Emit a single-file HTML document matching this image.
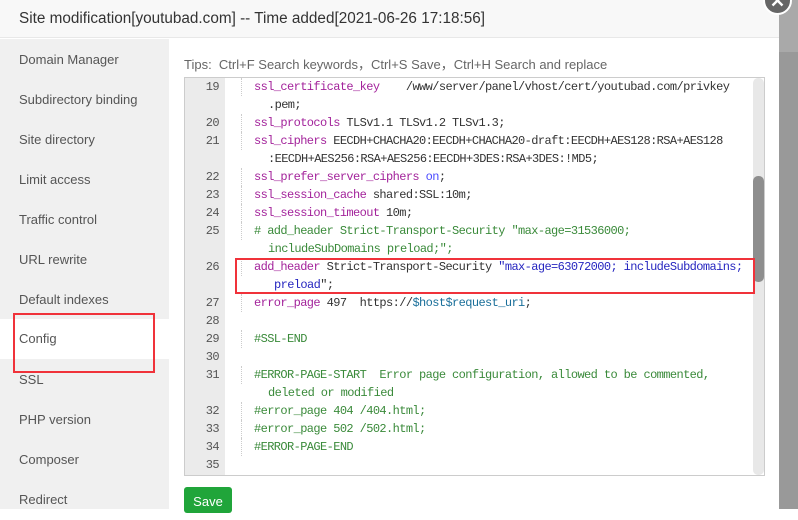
<!DOCTYPE html>
<html><head><meta charset="utf-8"><style>
*{margin:0;padding:0;box-sizing:border-box}
body{width:798px;height:509px;overflow:hidden;background:#fff;font-family:"Liberation Sans",sans-serif;position:relative}
.title{position:absolute;left:0;top:0;width:779px;height:38px;background:#f8f8f8;border-bottom:1px solid #e8e8e8;font-size:15.3px;color:#333;padding-left:19px;line-height:37px}
.side{position:absolute;left:0;top:39px;width:169px;height:470px;background:#f0f0f0}
.side div{position:absolute;left:0;width:169px;height:40px;line-height:40px;padding-left:19px;font-size:13px;color:#555}
.side .sel{background:#fff}
.strip{position:absolute;left:779px;top:0;width:19px;height:509px;background:#999}
.close{position:absolute;left:763px;top:-14px;width:29px;height:29px;border-radius:50%;background:#666;border:2px solid #fff}
.tips{position:absolute;left:184px;top:54px;font-size:13px;color:#666}
.ed{position:absolute;left:184px;top:77px;width:581px;height:399px;border:1px solid #ccc;background:#fff;overflow:hidden}
.gut{position:absolute;left:0;top:0;width:40px;height:399px;background:#ebebeb}
.ln{position:absolute;font-family:"Liberation Mono",monospace;font-size:12px;letter-spacing:-0.6px;height:18px;line-height:18px;white-space:pre;color:#333}
.n{left:0;width:34px;text-align:right;color:#555}
.g{position:absolute;left:56px;width:0;border-left:1px dotted #ccc;height:18px}
.t{left:69px}
.w{left:83px}
.k{color:#a3239b}.c{color:#3a8a3a}.s{color:#2626c0}.v{color:#1a6f9a}.o{color:#4a4aff}
.sb{position:absolute;left:568px;top:0;width:11px;height:397px;background:#e8e8e8;border-radius:5px}
.th{position:absolute;left:568px;top:98px;width:11px;height:106px;background:#8e8e8e;border-radius:5px}
.save{position:absolute;left:184px;top:487px;width:48px;height:26px;background:#20a53a;border-radius:3px;color:#fff;font-size:13px;text-align:center;line-height:30px}
.rb{position:absolute;border:2px solid #f0323a}
</style></head><body>
<div class="title">Site modification[youtubad.com] -- Time added[2021-06-26 17:18:56]</div>
<div class="side">
<div style="top:1px">Domain Manager</div>
<div style="top:41px">Subdirectory binding</div>
<div style="top:81px">Site directory</div>
<div style="top:121px">Limit access</div>
<div style="top:161px">Traffic control</div>
<div style="top:201px">URL rewrite</div>
<div style="top:241px">Default indexes</div>
<div class="sel" style="top:280px">Config</div>
<div style="top:321px">SSL</div>
<div style="top:361px">PHP version</div>
<div style="top:401px">Composer</div>
<div style="top:441px">Redirect</div>
</div>
<div class="tips">Tips:&nbsp; Ctrl+F Search keywords，Ctrl+S Save，Ctrl+H Search and replace</div>
<div class="ed">
<div class="gut"></div>
<div class="ln n" style="top:0">19</div><div class="g" style="top:0"></div><div class="ln t" style="top:0"><span class="k">ssl_certificate_key</span>    /www/server/panel/vhost/cert/youtubad.com/privkey</div>
<div class="ln w" style="top:18px">.pem;</div>
<div class="ln n" style="top:36px">20</div><div class="g" style="top:36px"></div><div class="ln t" style="top:36px"><span class="k">ssl_protocols</span> TLSv1.1 TLSv1.2 TLSv1.3;</div>
<div class="ln n" style="top:54px">21</div><div class="g" style="top:54px"></div><div class="ln t" style="top:54px"><span class="k">ssl_ciphers</span> EECDH+CHACHA20:EECDH+CHACHA20-draft:EECDH+AES128:RSA+AES128</div>
<div class="ln w" style="top:72px">:EECDH+AES256:RSA+AES256:EECDH+3DES:RSA+3DES:!MD5;</div>
<div class="ln n" style="top:90px">22</div><div class="g" style="top:90px"></div><div class="ln t" style="top:90px"><span class="k">ssl_prefer_server_ciphers</span> <span class="o">on</span>;</div>
<div class="ln n" style="top:108px">23</div><div class="g" style="top:108px"></div><div class="ln t" style="top:108px"><span class="k">ssl_session_cache</span> shared:SSL:10m;</div>
<div class="ln n" style="top:126px">24</div><div class="g" style="top:126px"></div><div class="ln t" style="top:126px"><span class="k">ssl_session_timeout</span> 10m;</div>
<div class="ln n" style="top:144px">25</div><div class="g" style="top:144px"></div><div class="ln t c" style="top:144px"># add_header Strict-Transport-Security "max-age=31536000;</div>
<div class="ln w c" style="top:162px">includeSubDomains preload;";</div>
<div class="ln n" style="top:180px">26</div><div class="g" style="top:180px"></div><div class="ln t" style="top:180px"><span class="k">add_header</span> Strict-Transport-Security <span class="s">"max-age=63072000; includeSubdomains;</span></div>
<div class="ln s" style="top:198px;left:89px">preload<span style="color:#333">";</span></div>
<div class="ln n" style="top:216px">27</div><div class="g" style="top:216px"></div><div class="ln t" style="top:216px"><span class="k">error_page</span> 497  https://<span class="v">$host$request_uri</span>;</div>
<div class="ln n" style="top:234px">28</div>
<div class="ln n" style="top:252px">29</div><div class="g" style="top:252px"></div><div class="ln t c" style="top:252px">#SSL-END</div>
<div class="ln n" style="top:270px">30</div>
<div class="ln n" style="top:288px">31</div><div class="g" style="top:288px"></div><div class="ln t c" style="top:288px">#ERROR-PAGE-START  Error page configuration, allowed to be commented,</div>
<div class="ln w c" style="top:306px">deleted or modified</div>
<div class="ln n" style="top:324px">32</div><div class="g" style="top:324px"></div><div class="ln t c" style="top:324px">#error_page 404 /404.html;</div>
<div class="ln n" style="top:342px">33</div><div class="g" style="top:342px"></div><div class="ln t c" style="top:342px">#error_page 502 /502.html;</div>
<div class="ln n" style="top:360px">34</div><div class="g" style="top:360px"></div><div class="ln t c" style="top:360px">#ERROR-PAGE-END</div>
<div class="ln n" style="top:378px">35</div>
<div class="sb"></div><div class="th"></div>
</div>
<div class="rb" style="left:235px;top:258px;width:520px;height:36px"></div>
<div class="rb" style="left:13px;top:313px;width:142px;height:60px"></div>
<div class="save">Save</div>
<div class="strip"><div style="position:absolute;left:0;top:0;width:19px;height:52px;background:#a9a9a9"></div></div>
<div class="close"><svg width="25" height="25" viewBox="0 0 25 25" style="position:absolute;left:0;top:0"><path d="M7.5 7.5L17.5 17.5M17.5 7.5L7.5 17.5" stroke="#fff" stroke-width="2.4" fill="none"/></svg></div>
</body></html>
